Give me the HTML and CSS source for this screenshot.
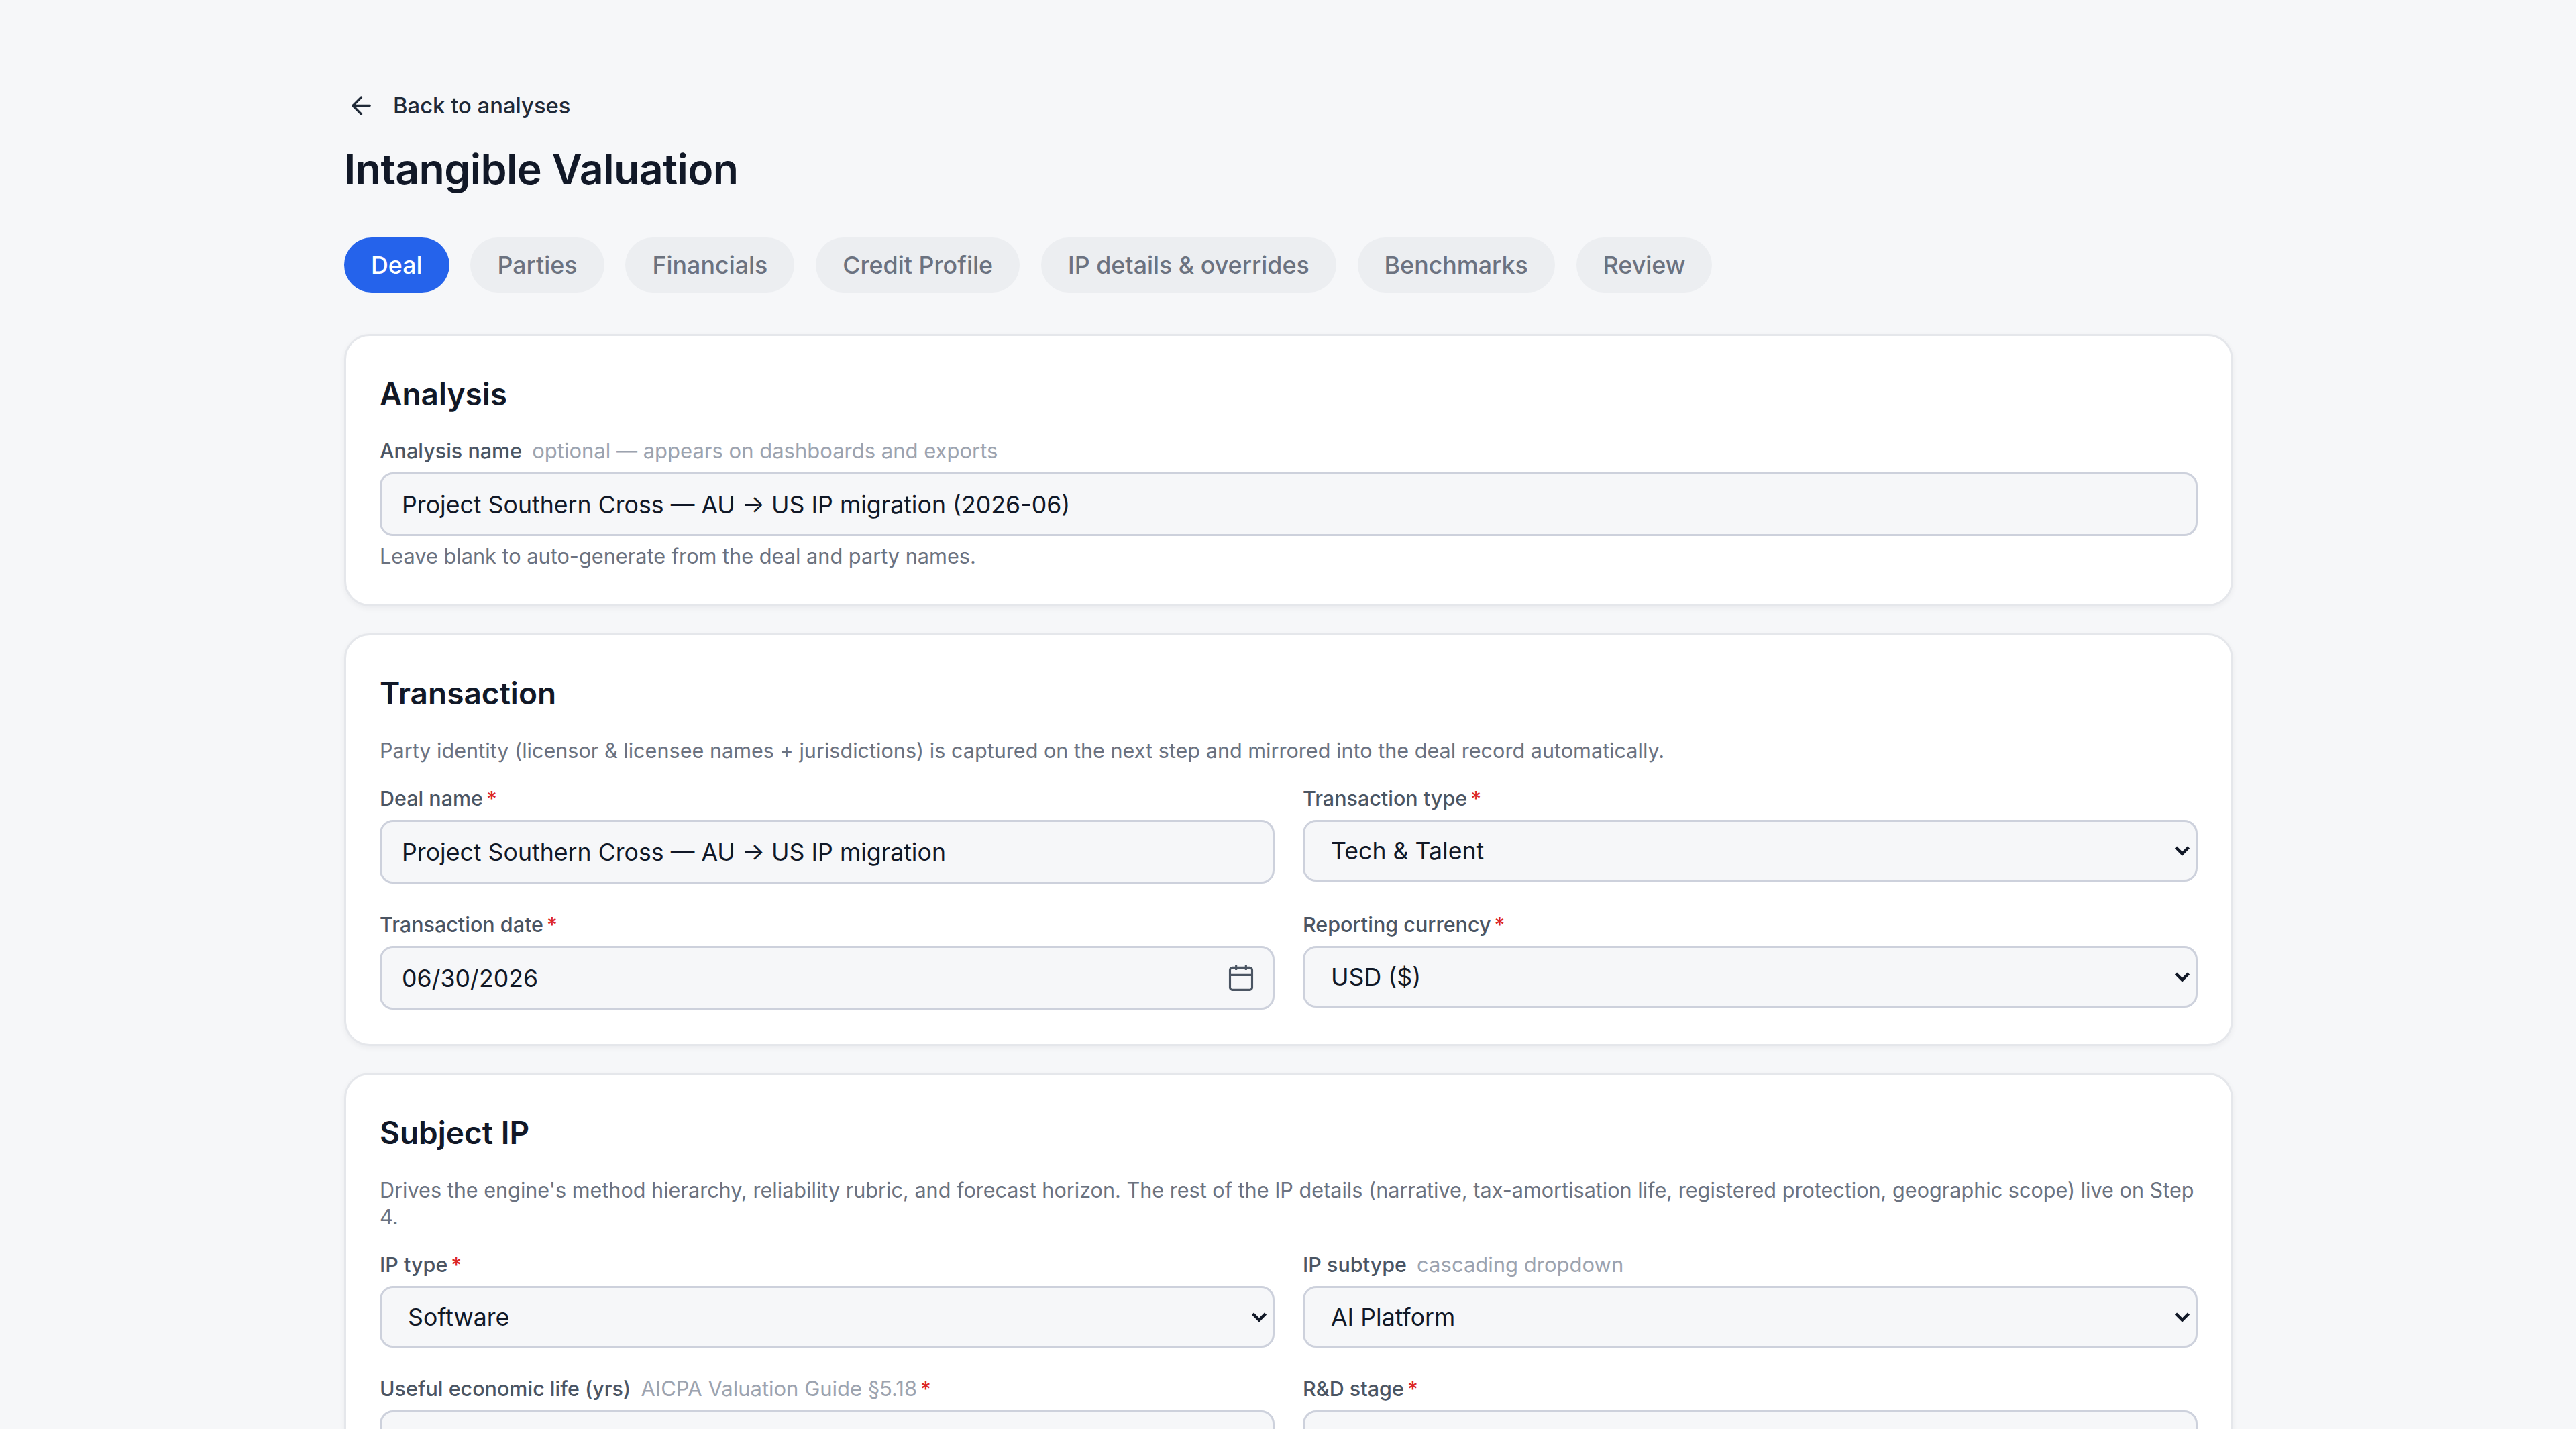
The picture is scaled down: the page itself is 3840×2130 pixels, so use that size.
FILE: index.html
```html
<!DOCTYPE html>
<html lang="en">
<head>
  <meta charset="UTF-8">
  <title>Intangible Valuation</title>
  <link rel="stylesheet" href="styles.css">
</head>
<body>

<main class="page">
  <a class="back" href="#">
    <svg class="back-icon" viewBox="0 0 24 24"><path d="M19 12H5"/><path d="M12 19l-7-7 7-7"/></svg>
    Back to analyses
  </a>
  <h1>Intangible Valuation</h1>

  <nav class="tabs">
    <a class="tab active" href="#">Deal</a>
    <a class="tab" href="#">Parties</a>
    <a class="tab" href="#">Financials</a>
    <a class="tab" href="#">Credit Profile</a>
    <a class="tab" href="#">IP details &amp; overrides</a>
    <a class="tab" href="#">Benchmarks</a>
    <a class="tab" href="#">Review</a>
  </nav>

  <section class="card">
    <h2 class="first">Analysis</h2>
    <label class="label">Analysis name <span class="note">optional — appears on dashboards and exports</span></label>
    <input class="field" type="text" value="Project Southern Cross — AU → US IP migration (2026-06)">
    <p class="hint">Leave blank to auto-generate from the deal and party names.</p>
  </section>

  <section class="card">
    <h2>Transaction</h2>
    <p class="desc">Party identity (licensor &amp; licensee names + jurisdictions) is captured on the next step and mirrored into the deal record automatically.</p>
    <div class="grid">
      <div>
        <label class="label">Deal name<span class="req">*</span></label>
        <input class="field" type="text" value="Project Southern Cross — AU → US IP migration">
      </div>
      <div>
        <label class="label">Transaction type<span class="req">*</span></label>
        <div class="select-wrap">
          <select class="field select"><option>Tech &amp; Talent</option></select>
          <svg class="chevron" viewBox="0 0 24 16"><path d="M2.5 3l9.5 9.5L21.5 3"/></svg>
        </div>
      </div>
      <div>
        <label class="label">Transaction date<span class="req">*</span></label>
        <div class="date-wrap">
          <input class="field" type="text" value="06/30/2026">
          <svg class="calendar" viewBox="0 0 24 24"><rect x="3" y="4" width="18" height="18" rx="2"/><path d="M3 10h18"/><path d="M8 2v4"/><path d="M16 2v4"/></svg>
        </div>
      </div>
      <div>
        <label class="label">Reporting currency<span class="req">*</span></label>
        <div class="select-wrap">
          <select class="field select"><option>USD ($)</option></select>
          <svg class="chevron" viewBox="0 0 24 16"><path d="M2.5 3l9.5 9.5L21.5 3"/></svg>
        </div>
      </div>
    </div>
  </section>

  <section class="card">
    <h2>Subject IP</h2>
    <p class="desc">Drives the engine's method hierarchy, reliability rubric, and forecast horizon. The rest of the IP details (narrative, tax-amortisation life, registered protection, geographic scope) live on Step 4.</p>
    <div class="grid">
      <div>
        <label class="label">IP type<span class="req">*</span></label>
        <div class="select-wrap">
          <select class="field select"><option>Software</option></select>
          <svg class="chevron" viewBox="0 0 24 16"><path d="M2.5 3l9.5 9.5L21.5 3"/></svg>
        </div>
      </div>
      <div>
        <label class="label">IP subtype <span class="note">cascading dropdown</span></label>
        <div class="select-wrap">
          <select class="field select"><option>AI Platform</option></select>
          <svg class="chevron" viewBox="0 0 24 16"><path d="M2.5 3l9.5 9.5L21.5 3"/></svg>
        </div>
      </div>
      <div>
        <label class="label">Useful economic life (yrs) <span class="note">AICPA Valuation Guide §5.18</span><span class="req">*</span></label>
        <input class="field" type="text">
      </div>
      <div>
        <label class="label">R&amp;D stage<span class="req">*</span></label>
        <input class="field" type="text">
      </div>
    </div>
  </section>
</main>

</body>
</html>
```

FILE: styles.css
```css
html, body {
  margin: 0;
  height: 2130px;
  overflow: hidden;
}

body {
  font-family: 'Inter', 'Liberation Sans', sans-serif;
  background: #f6f7f9;
  color: #111827;
}

.page {
  width: 2816px;
  margin: 0 0 0 513px;
  padding-top: 135px;
}

.back {
  display: flex;
  align-items: center;
  gap: 26px;
  height: 44px;
  padding-left: 4px;
  font-size: 32.8px;
  font-weight: 500;
  color: #1f2937;
  text-decoration: none;
}

.back-icon {
  width: 43px;
  height: 43px;
  fill: none;
  stroke: #1f2937;
  stroke-width: 1.9;
  stroke-linecap: round;
  stroke-linejoin: round;
}

h1 {
  margin: 29px 0 0;
  font-size: 62.6px;
  line-height: 88px;
  font-weight: 600;
  letter-spacing: -0.6px;
  color: #111827;
}

.tabs {
  display: flex;
  gap: 31.9px;
  margin-top: 58px;
}

.tab {
  display: flex;
  align-items: center;
  height: 82px;
  padding: 0 40px;
  border-radius: 41px;
  background: #eceef1;
  color: #6b7280;
  font-size: 35.8px;
  font-weight: 500;
  text-decoration: none;
}

.tab.active {
  background: #2563eb;
  color: #fff;
}

.card {
  margin-top: 62px;
  padding: 50px 50px 51px;
  background: #fff;
  border: 3px solid #e5e7eb;
  border-radius: 38px;
  box-shadow: 0 3px 8px rgba(17, 24, 39, 0.05);
}

.card + .card {
  margin-top: 40px;
}

h2 {
  margin: 0;
  font-size: 46px;
  line-height: 72px;
  font-weight: 600;
  color: #111827;
}

h2.first {
  margin-bottom: 29px;
}

.label {
  display: block;
  margin-bottom: 12px;
  font-size: 30.5px;
  line-height: 40px;
  font-weight: 500;
  color: #4b5563;
}

.note {
  margin-left: 7px;
  font-size: 31px;
  font-weight: 400;
  color: #9ca3af;
}

.req {
  margin-left: 5px;
  color: #dc2626;
}

.field {
  display: block;
  box-sizing: border-box;
  width: 100%;
  height: 95px;
  padding: 0 30px;
  background: #f6f7f9;
  border: 3px solid #cdd1dc;
  border-radius: 20px;
  font-family: inherit;
  font-size: 35.7px;
  color: #111827;
}

.select {
  height: 92px;
  padding: 0 39px;
  appearance: none;
}

.select-wrap,
.date-wrap {
  position: relative;
}

.chevron {
  position: absolute;
  right: 11px;
  top: 38px;
  width: 24px;
  height: 16px;
  fill: none;
  stroke: #111827;
  stroke-width: 4.5;
}

.calendar {
  position: absolute;
  right: 28px;
  top: 25px;
  width: 44px;
  height: 44px;
  fill: none;
  stroke: #4b5563;
  stroke-width: 1.7;
}

.hint {
  margin: 10px 0 1px;
  font-size: 30.7px;
  line-height: 40px;
  color: #6b7280;
}

.desc {
  margin: 30px 0 31px;
  font-size: 30.6px;
  line-height: 40px;
  color: #6b7280;
}

.grid {
  display: grid;
  grid-template-columns: 1fr 1fr;
  column-gap: 42px;
  row-gap: 41px;
}
```
